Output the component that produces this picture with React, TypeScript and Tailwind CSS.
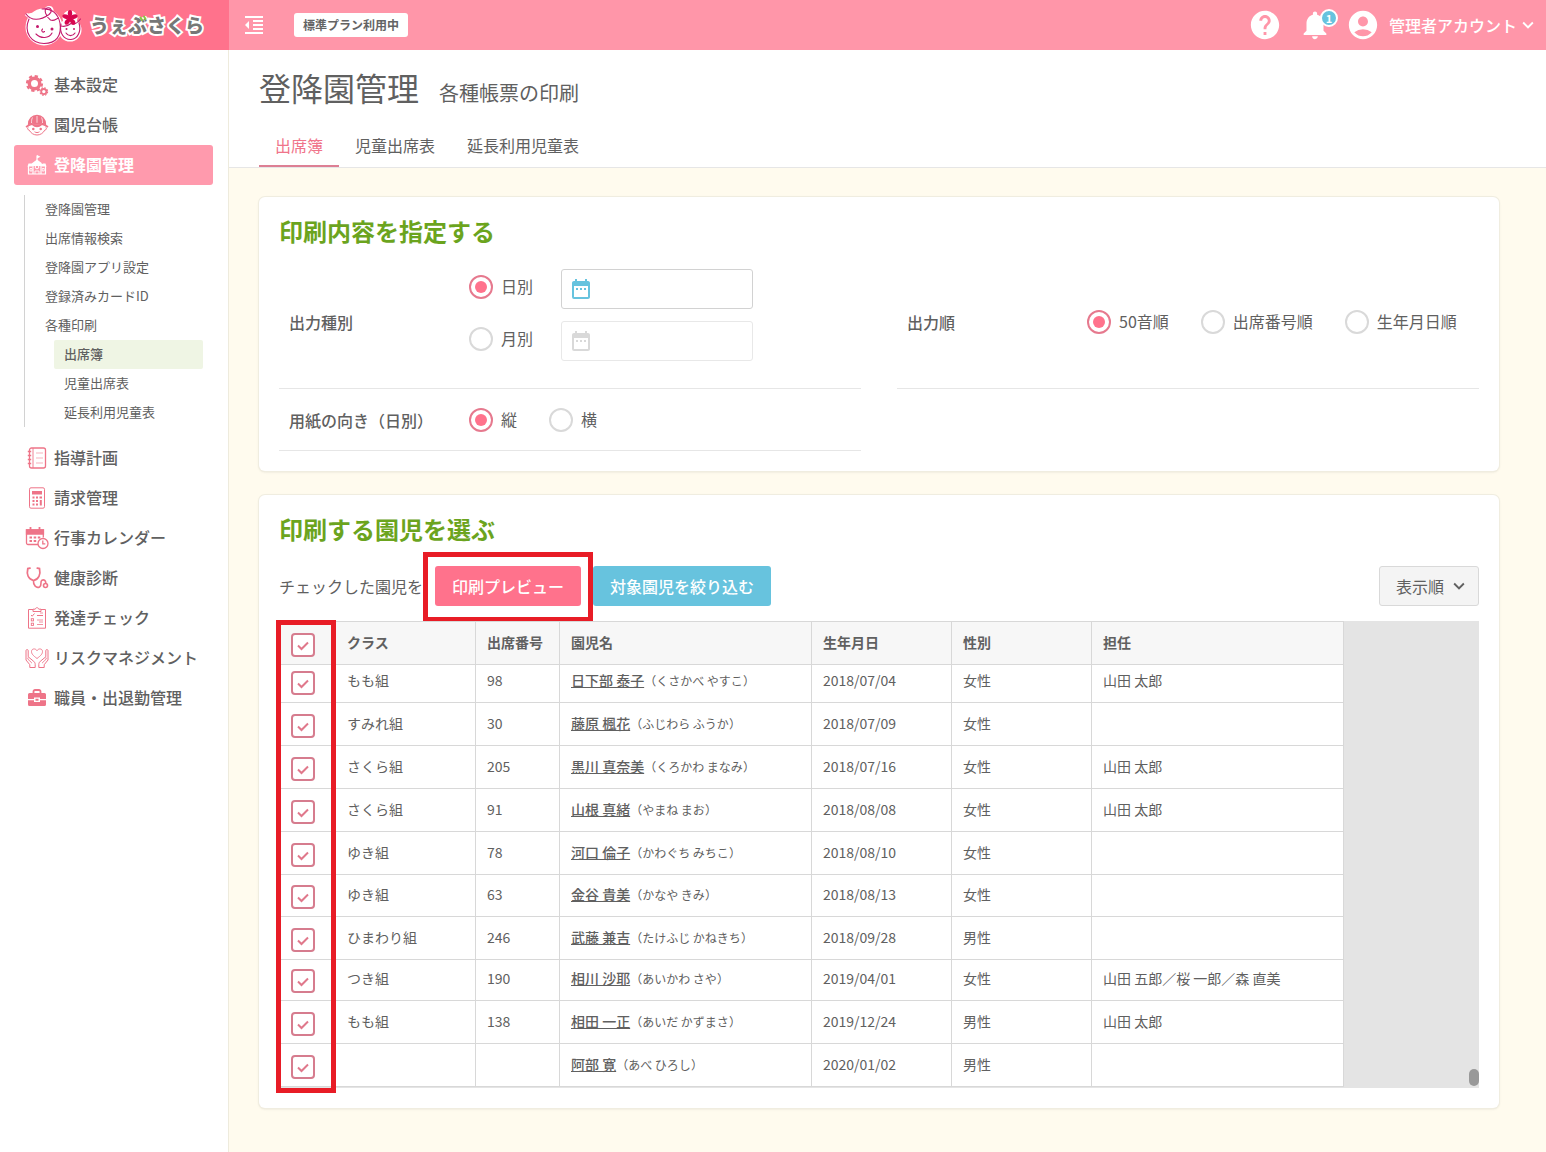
import type { ReactNode } from "react"
import {
  MdAccountCircle, MdDateRange, MdFormatIndentDecrease, MdHelp, MdKeyboardArrowDown, MdNotifications,
} from "react-icons/md"

// ─── Icons ──────────────────────────────────────────────────────────────────
function Icon({ children }: { children: ReactNode }) {
  return (
    <svg viewBox="0 0 24 24" className="size-6 shrink-0" fill="none" stroke="currentColor" strokeWidth="1.3" aria-hidden="true">
      {children}
    </svg>
  )
}

const GearIcon = () => (
  <Icon>
    <circle cx="9.5" cy="10.5" r="5.2" strokeWidth="3.4" />
    <circle cx="9.5" cy="10.5" r="7.4" strokeWidth="2.4" strokeDasharray="3.2 2.61" />
    <circle cx="18.8" cy="18.6" r="2.6" strokeWidth="1.8" />
    <circle cx="18.8" cy="18.6" r="3.8" strokeWidth="1.2" strokeDasharray="1.6 1.38" />
  </Icon>
)

const ChildIcon = () => (
  <Icon>
    <path d="M3.5 11.5C3.5 6 7 2.500 12 2.500s8.500 3.500 8.500 9c-5-2.400-12-2.400-17 0z" fill="currentColor" />
    <path d="M12 3v7M7.500 4.500C6.500 6.500 6.500 8 6.500 10M16.500 4.500c1 2 1 3.500 1 5.500" stroke="#fff" strokeWidth=".7" />
    <path d="M1 14c6-4.500 16-4.500 22 0" strokeWidth="1.600" />
    <path d="M3.500 14c-1.500.5-1 3.200.8 3.200 1.500 3 4.500 4.800 7.700 4.800s6.200-1.800 7.700-4.800c1.800 0 2.300-2.700.8-3.200" strokeWidth="1" />
    <path d="M8 12c2 2 6 2 8 0z" fill="currentColor" />
    <circle cx="8.300" cy="16" r=".6" fill="currentColor" />
    <circle cx="15.700" cy="16" r=".6" fill="currentColor" />
    <path d="M9.500 18.800c1.500 1 3.500 1 5 0" strokeWidth="1" />
  </Icon>
)

const SchoolIcon = () => (
  <Icon>
    <path d="M12 8V2.500" strokeWidth="1.200" />
    <path d="M12 2l3.500 1.700L12 5.500zM12 6.500l6 4.500h-1.500v2h-9v-2H6zM3.500 10.500h4v3H2.500zM20.500 10.500h-4v3h5z" fill="currentColor" stroke="none" />
    <path d="M3.500 13v8h17v-8M8 13v8M16 13v8" strokeWidth="1.200" />
    <circle cx="12" cy="14" r="1.800" strokeWidth="1" />
    <path d="M10 21v-3h4v3M5 15.500h2v2.500h-2zM17.200 15.500h2v2.500h-2z" strokeWidth=".9" />
  </Icon>
)

const NotebookIcon = () => (
  <Icon>
    <rect x="4.500" y="2" width="16" height="20" rx="2" />
    <path d="M8 2v20" strokeWidth=".9" />
    <path d="M2.800 5.500h3.400M2.800 9.500h3.400M2.800 13.500h3.400M2.800 17.500h3.400" strokeWidth="1.500" />
    <path d="M11 7h7M11 12h7M11 17h7" strokeWidth=".8" opacity=".7" />
  </Icon>
)

const CalculatorIcon = () => (
  <Icon>
    <rect x="4.500" y="1.800" width="15" height="20.400" rx="1.500" strokeWidth="1" />
    <rect x="7" y="5" width="10" height="3.500" fill="currentColor" stroke="none" />
    <path d="M7.500 11.500h2M11 11.500h2M7.500 15h2M11 15h2M7.500 18.500h2M11 18.500h2" strokeWidth="1.800" />
    <path d="M14.500 11.500h2.500M15.800 14v5.400" strokeWidth="2" />
  </Icon>
)

const CalendarClockIcon = () => (
  <Icon>
    <path d="M13 18.500H3a1.500 1.500 0 0 1-1.500-1.500V4h16.800v7.500" />
    <path d="M1.500 4h17v4h-17z" fill="currentColor" />
    <path d="M5.500 1v4M14.500 1v4" strokeWidth="1.800" />
    <path d="M4.500 11.500h2.500M8.700 11.500h2.500M12.800 11.500h2.500M4.500 15h2.500M8.700 15h2.500" strokeWidth="2.200" />
    <circle cx="18" cy="17.500" r="5" fill="#fff" />
    <path d="M17.800 14.500v3.300h2.500" />
  </Icon>
)

const StethoscopeIcon = () => (
  <Icon>
    <path d="M5 2.200L2.800 2.600C1.500 8 3 13 8.500 14.500 14 13 15.700 8 14.500 2.600l-2.200-.4" strokeWidth="1.800" strokeLinecap="round" />
    <path d="M8.500 14.500c-.5 5 3 8 6 6.500 3-1.800 0-5 2.500-6.800 1.800-1 3.800.2 3.800 2.800" strokeWidth="1.600" />
    <circle cx="20.500" cy="19.500" r="2" strokeWidth="1.600" />
  </Icon>
)

const ChecklistIcon = () => (
  <Icon>
    <path d="M8 3.500H3.500v18.700h17V3.500H16" strokeWidth="1" />
    <path d="M8 5.500v-2.300h2.200c.5-2 3.100-2 3.600 0H16v2.300z" strokeWidth="1" />
    <path d="M6 9l1.200 1.200L9.500 7.500M12 9.500h6" strokeWidth="1" />
    <rect x="6.300" y="12.700" width="2.200" height="2.200" strokeWidth=".9" />
    <rect x="6.300" y="17.200" width="2.200" height="2.200" strokeWidth=".9" />
    <path d="M12 14h6M12 18.500h6M15 7h3M14 16h4" strokeWidth=".8" />
  </Icon>
)

const HandsHeartIcon = () => (
  <Icon>
    <path d="M12 12.500C8 9.500 6.500 7.800 6.500 5.500c0-3 4-3.500 5.500-.8 1.500-2.700 5.500-2.200 5.500.8 0 2.300-1.500 4-5.500 7z" strokeWidth=".9" />
    <path d="M4.800 21.500v-2.800L1 14V4.500c0-1.200 2.200-1.200 2.200 0v6.300l5.500 4.500c1 1 1.500 1.800 1.500 3.200v3zM3.200 11.500c-1 .8-.6 1.500 3.600 5.500" strokeWidth="1" />
    <path d="M19.200 21.500v-2.800L23 14V4.500c0-1.200-2.200-1.200-2.200 0v6.300l-5.500 4.500c-1 1-1.500 1.800-1.500 3.200v3zM20.800 11.500c1 .8.6 1.500-3.600 5.500" strokeWidth="1" />
  </Icon>
)

const BriefcaseIcon = () => (
  <Icon>
    <path d="M8.500 7V5.500a1.500 1.500 0 0 1 1.500-1.500h4a1.500 1.500 0 0 1 1.500 1.500V7" strokeWidth="1.800" />
    <path d="M4.500 7h15a1.500 1.500 0 0 1 1.500 1.500V13h-6v-1.500H9V13H3V8.500A1.500 1.500 0 0 1 4.500 7zM3 14.300h6V16h6v-1.700h6v4.200a1.500 1.500 0 0 1-1.500 1.500h-15A1.500 1.500 0 0 1 3 18.500zM10.500 12.700h3v2h-3z" fill="currentColor" stroke="none" />
  </Icon>
)

function Logo() {
  return (
    <a href="#" className="w-[229px] shrink-0 h-full bg-[#ff728c] flex items-center pl-6 gap-2">
      <svg viewBox="0 0 58 42" className="w-[58px] h-[42px]" fill="none" aria-hidden="true">
        <g fill="#fff" stroke="#fff" strokeWidth="3" strokeLinejoin="round">
          <circle cx="20" cy="23" r="17" />
          <circle cx="46" cy="26" r="10" />
          <circle cx="46" cy="14" r="6" />
          <path d="M2 10C8 17 20 14 28 7c1-4-5-5-6-1" />
        </g>
        <g stroke="#c4186c" strokeWidth="1.100" strokeLinecap="round">
          <path d="M5 15C-1 29 8 39.500 20 39.500S38 32 36 19C34 9 27 4 18 5" />
          <path d="M2 10c5 7 14 7 23 .5 4-3.500 2-8-2-6.500-3.500 1.500-1.500 8 3.500 12 4 1.500 5-1 8-2" />
          <path d="M37 20c-2 9 3 16 10 15.500S57.500 27 55 19" />
          <path d="M37 22c4 1 7 0 10-2.500 2.500 1.500 5.500.5 9.500-4.500" />
          <path d="M12 30c5 5 13 4.500 16-1M18.500 25c-2 2 .5 4 2 2.500M42 29c2 3.500 7 3.500 9 0" />
        </g>
        <g fill="#c4186c">
          <circle cx="13.500" cy="22.500" r="1.500" />
          <circle cx="28" cy="25" r="1.500" />
          <circle cx="42.500" cy="25" r="1" />
          <circle cx="50" cy="25" r="1" />
        </g>
        <g fill="#d8064f">
          <ellipse cx="46" cy="9.500" rx="2.200" ry="3.400" />
          <ellipse cx="46" cy="9.500" rx="2.200" ry="3.400" transform="rotate(72 46 14)" />
          <ellipse cx="46" cy="9.500" rx="2.200" ry="3.400" transform="rotate(144 46 14)" />
          <ellipse cx="46" cy="9.500" rx="2.200" ry="3.400" transform="rotate(216 46 14)" />
          <ellipse cx="46" cy="9.500" rx="2.200" ry="3.400" transform="rotate(288 46 14)" />
          <circle cx="46" cy="14" r="2.500" />
        </g>
      </svg>
      <span className="relative text-[19px] leading-6 font-black text-[#777] [-webkit-text-stroke:4px_#fff] [paint-order:stroke]">
        うぇぶさくら
        <svg viewBox="0 0 8 7" className="absolute left-[49px] top-0.5 w-2 h-[7px]" stroke="#8cc63f" strokeWidth="2" strokeLinecap="round" aria-hidden="true">
          <path d="M1.500 2.500l1.500 2.500M5 1.500l1.500 2.500" />
        </svg>
      </span>
    </a>
  )
}

// ─── Data ───────────────────────────────────────────────────────────────────
const menuTop = [
  { label: "基本設定", icon: GearIcon },
  { label: "園児台帳", icon: ChildIcon },
  { label: "登降園管理", icon: SchoolIcon, active: true },
]

const subMenu = ["登降園管理", "出席情報検索", "登降園アプリ設定", "登録済みカードID", "各種印刷"]
const printMenu = ["出席簿", "児童出席表", "延長利用児童表"]

const menuBottom = [
  { label: "指導計画", icon: NotebookIcon },
  { label: "請求管理", icon: CalculatorIcon },
  { label: "行事カレンダー", icon: CalendarClockIcon },
  { label: "健康診断", icon: StethoscopeIcon },
  { label: "発達チェック", icon: ChecklistIcon },
  { label: "リスクマネジメント", icon: HandsHeartIcon },
  { label: "職員・出退勤管理", icon: BriefcaseIcon },
]

const children = [
  { cls: "もも組", no: "98", name: "日下部 泰子", kana: "くさかべ やすこ", birth: "2018/07/04", sex: "女性", teacher: "山田 太郎", height: "h-[38px]" },
  { cls: "すみれ組", no: "30", name: "藤原 楓花", kana: "ふじわら ふうか", birth: "2018/07/09", sex: "女性", teacher: "" },
  { cls: "さくら組", no: "205", name: "黒川 真奈美", kana: "くろかわ まなみ", birth: "2018/07/16", sex: "女性", teacher: "山田 太郎" },
  { cls: "さくら組", no: "91", name: "山根 真緒", kana: "やまね まお", birth: "2018/08/08", sex: "女性", teacher: "山田 太郎" },
  { cls: "ゆき組", no: "78", name: "河口 倫子", kana: "かわぐち みちこ", birth: "2018/08/10", sex: "女性", teacher: "" },
  { cls: "ゆき組", no: "63", name: "金谷 貴美", kana: "かなや きみ", birth: "2018/08/13", sex: "女性", teacher: "", height: "h-[42px]" },
  { cls: "ひまわり組", no: "246", name: "武藤 兼吉", kana: "たけふじ かねきち", birth: "2018/09/28", sex: "男性", teacher: "" },
  { cls: "つき組", no: "190", name: "相川 沙耶", kana: "あいかわ さや", birth: "2019/04/01", sex: "女性", teacher: "山田 五郎／桜 一郎／森 直美", height: "h-[41px]" },
  { cls: "もも組", no: "138", name: "相田 一正", kana: "あいだ かずまさ", birth: "2019/12/24", sex: "男性", teacher: "山田 太郎" },
  { cls: "", no: "", name: "阿部 寛", kana: "あべ ひろし", birth: "2020/01/02", sex: "男性", teacher: "" },
]

// ─── Form parts ─────────────────────────────────────────────────────────────
function Radio({ name, label, checked }: { name: string; label: string; checked?: boolean }) {
  return (
    <label className="flex items-center gap-2 cursor-pointer whitespace-nowrap">
      <input
        type="radio"
        name={name}
        defaultChecked={checked}
        className="appearance-none size-6 shrink-0 rounded-full border-2 border-[#d9d9d9] bg-white checked:border-[#e6798e] checked:bg-[#ff728c] checked:bg-clip-content checked:p-1"
      />
      <span className="pb-0.5">{label}</span>
    </label>
  )
}

function Checkbox({ label }: { label: string }) {
  return (
    <span className="relative block size-6">
      <input type="checkbox" defaultChecked aria-label={label} className="peer appearance-none block size-6 rounded border-2 border-[#d67c8e] bg-white" />
      <svg viewBox="0 0 24 24" className="absolute inset-0 size-6 pointer-events-none opacity-0 peer-checked:opacity-100" fill="none" stroke="#e0788b" strokeWidth="2">
        <path d="M7 12.500l3.500 3.500L17 9.500" />
      </svg>
    </span>
  )
}

function DateField({ label, disabled }: { label: string; disabled?: boolean }) {
  return (
    <div className="relative w-48">
      <input
        type="text"
        aria-label={label}
        disabled={disabled}
        className="block w-full h-10 rounded-[3px] border border-[#d2d2d2] bg-white pl-9 pr-2 disabled:border-[#e8e8e8]"
      />
      <MdDateRange className={`absolute left-2 top-2 size-6 pointer-events-none ${disabled ? "text-[#d9d9d9]" : "text-[#67c3de]"}`} />
    </div>
  )
}

function MenuItem({ label, icon: ItemIcon, active }: { label: string; icon: () => ReactNode; active?: boolean }) {
  return (
    <li>
      <a
        href="#"
        className={`flex items-center gap-[5px] h-10 pl-[11px] rounded-[3px] text-base ${active ? "bg-[#ff9aad] text-white font-bold" : "font-medium"}`}
      >
        <span className={active ? "text-white" : "text-[#ee7488]"}><ItemIcon /></span>
        <span className="pb-0.5">{label}</span>
      </a>
    </li>
  )
}

// ─── Page sections ──────────────────────────────────────────────────────────
function Header() {
  return (
    <header className="h-[50px] bg-[#ff96a9] text-white flex items-center">
      <Logo />
      <button type="button" aria-label="メニューを閉じる" className="ml-[13px]">
        <MdFormatIndentDecrease className="size-6" />
      </button>
      <span className="ml-7 h-6 rounded-[3px] bg-white px-[9px] text-xs leading-6 font-bold text-[#646464]">標準プラン利用中</span>
      <div className="ml-auto flex items-center pr-[7px]">
        <button type="button" aria-label="ヘルプ"><MdHelp className="size-[34px]" /></button>
        <button type="button" aria-label="お知らせ" className="relative ml-4">
          <MdNotifications className="size-[34px]" />
          <span className="absolute left-[22px] top-px size-[18px] rounded-full border-2 border-white bg-[#67c3de] text-[11px] leading-[14px] font-bold text-center">1</span>
        </button>
        <button type="button" className="ml-3.5 flex items-center text-base font-medium">
          <MdAccountCircle className="size-[34px] mr-[9px]" />
          管理者アカウント
          <MdKeyboardArrowDown className="size-[22px]" />
        </button>
      </div>
    </header>
  )
}

function Sidebar() {
  return (
    <nav className="w-[229px] shrink-0 bg-white border-r border-[#eeebdd] pt-[15px] pl-3.5 pr-[15px]">
      <ul>{menuTop.map(m => <MenuItem key={m.label} {...m} />)}</ul>
      <ul className="mt-2.5 mb-[11px] ml-2.5 pl-5 pr-2.5 border-l border-[#d2d2d2] text-[13px] leading-[27px]">
        {subMenu.map(s => <li key={s}><a href="#" className="block pb-0.5">{s}</a></li>)}
        {printMenu.map((s, i) => (
          <li key={s} className="pl-[9px]">
            <a href="#" className={`block pb-0.5 pl-2.5 rounded-[2px] ${i === 0 ? "bg-[#eff5e4] font-medium" : ""}`}>{s}</a>
          </li>
        ))}
      </ul>
      <ul>{menuBottom.map(m => <MenuItem key={m.label} {...m} />)}</ul>
    </nav>
  )
}

function PrintSettings() {
  return (
    <section className="rounded-md bg-white ring-1 ring-[#f0ede0] shadow-sm px-5 pt-4 pb-5">
      <h2 className="text-2xl leading-9 font-bold text-[#6ba41e]">印刷内容を指定する</h2>
      <div className="mt-2 grid grid-cols-2 gap-x-9">
        <div className="flex items-center border-b border-[#e6e6e6] pl-2.5">
          <div className="w-[180px] shrink-0 pb-0.5 font-medium">出力種別</div>
          <div className="flex flex-col gap-3 pt-3 pb-[27px]">
            <div className="flex gap-7"><div className="h-9 flex"><Radio name="type" label="日別" checked /></div><DateField label="日付" /></div>
            <div className="flex gap-7"><div className="h-9 flex"><Radio name="type" label="月別" /></div><DateField label="年月" disabled /></div>
          </div>
        </div>
        <div className="flex items-center border-b border-[#e6e6e6] pl-2.5">
          <div className="w-[180px] shrink-0 pb-0.5 font-medium">出力順</div>
          <div className="flex gap-8 pb-0.5">
            <Radio name="order" label="50音順" checked />
            <Radio name="order" label="出席番号順" />
            <Radio name="order" label="生年月日順" />
          </div>
        </div>
        <div className="flex items-center h-[62px] border-b border-[#e6e6e6] pl-2.5">
          <div className="w-[180px] shrink-0 font-medium">用紙の向き（日別）</div>
          <div className="flex gap-8">
            <Radio name="orientation" label="縦" checked />
            <Radio name="orientation" label="横" />
          </div>
        </div>
      </div>
    </section>
  )
}

function ChildrenTable() {
  const cell = "border-r border-b border-[#d8d8d8] align-bottom pl-[11px] pb-3 leading-5"
  return (
    <div className="relative mt-[15px] bg-[#e4e4e4] pb-px">
      <table className="w-[1065px] table-fixed border-separate border-spacing-0 bg-white text-sm">
        <colgroup>
          <col className="w-[57px]" /><col className="w-[140px]" /><col className="w-[84px]" /><col className="w-[252px]" />
          <col className="w-[140px]" /><col className="w-[140px]" /><col />
        </colgroup>
        <thead>
          <tr className="h-11 bg-[#f7f7f7] text-left [&>th]:border-t">
            <th className="border-b border-r border-[#d8d8d8] align-bottom pl-3 pb-[7px]"><Checkbox label="すべて選択" /></th>
            {["クラス", "出席番号", "園児名", "生年月日", "性別", "担任"].map(h => (
              <th key={h} scope="col" className={`${cell} font-bold`}>{h}</th>
            ))}
          </tr>
        </thead>
        <tbody>
          {children.map(c => (
            <tr key={c.name} className={c.height ?? "h-[43px]"}>
              <td className="border-b border-r border-[#d8d8d8] align-bottom pl-3 pb-[7px]"><Checkbox label={c.name} /></td>
              <td className={cell}>{c.cls}</td>
              <td className={cell}>{c.no}</td>
              <td className={cell}>
                <a href="#" className="font-medium underline">{c.name}</a>
                <span className="text-xs">（{c.kana}）</span>
              </td>
              <td className={cell}>{c.birth}</td>
              <td className={cell}>{c.sex}</td>
              <td className={cell}>{c.teacher}</td>
            </tr>
          ))}
        </tbody>
      </table>
      {/* scroll thumb */}
      <div className="absolute right-0 bottom-0.5 w-2.5 h-[17px] rounded-full bg-[#999]" />
      {/* marker around the checkbox column */}
      <div className="absolute -left-[3px] -top-px -bottom-[5px] w-[60px] border-5 border-[#e81c26] pointer-events-none" />
    </div>
  )
}

function ChildrenSection() {
  return (
    <section className="mt-6 rounded-md bg-white ring-1 ring-[#f0ede0] shadow-sm px-5 pt-4 pb-5">
      <h2 className="text-2xl leading-9 font-bold text-[#6ba41e]">印刷する園児を選ぶ</h2>
      <div className="mt-[19px] flex items-center">
        <span>チェックした園児を</span>
        <div className="relative ml-3">
          <button type="button" className="block h-10 px-[17px] rounded-[3px] bg-[#ff728c] text-white font-medium">印刷プレビュー</button>
          {/* marker around the preview button */}
          <div className="absolute -left-3 -right-3 -top-3.5 -bottom-4 border-5 border-[#e81c26] pointer-events-none" />
        </div>
        <button type="button" className="ml-3 h-10 px-[17px] rounded-[3px] bg-[#67c3de] text-white font-medium">対象園児を絞り込む</button>
        <button type="button" className="ml-auto flex items-center gap-1 h-10 pl-4 pr-2 rounded-[3px] border border-[#d9d9d9] bg-[#f4f4f4]">
          表示順
          <MdKeyboardArrowDown className="size-[22px]" />
        </button>
      </div>
      <ChildrenTable />
    </section>
  )
}

export default function App() {
  return (
    <div className="min-h-screen flex flex-col text-base text-[#606060] font-['Noto_Sans_CJK_JP','Noto_Sans',sans-serif]">
      <Header />
      <div className="flex-1 flex">
        <Sidebar />
        <main className="flex-1 min-w-0 bg-[#fffbee]">
          <div className="bg-white border-b border-[#e6e6e6] pl-[30px] pt-[13px]">
            <h1 className="flex items-baseline gap-5 leading-[48px]">
              <span className="text-[32px]">登降園管理</span>
              <span className="text-xl">各種帳票の印刷</span>
            </h1>
            <div className="mt-[15px] flex">
              <a href="#" className="h-[41px] px-4 leading-[38px] text-[#f0748a] border-b-2 border-[#dd7f94]">出席簿</a>
              <a href="#" className="h-[41px] px-4 leading-[38px]">児童出席表</a>
              <a href="#" className="h-[41px] px-4 leading-[38px]">延長利用児童表</a>
            </div>
          </div>
          <div className="pl-[30px] pr-[47px] pt-[29px] pb-11">
            <PrintSettings />
            <ChildrenSection />
          </div>
        </main>
      </div>
    </div>
  )
}
